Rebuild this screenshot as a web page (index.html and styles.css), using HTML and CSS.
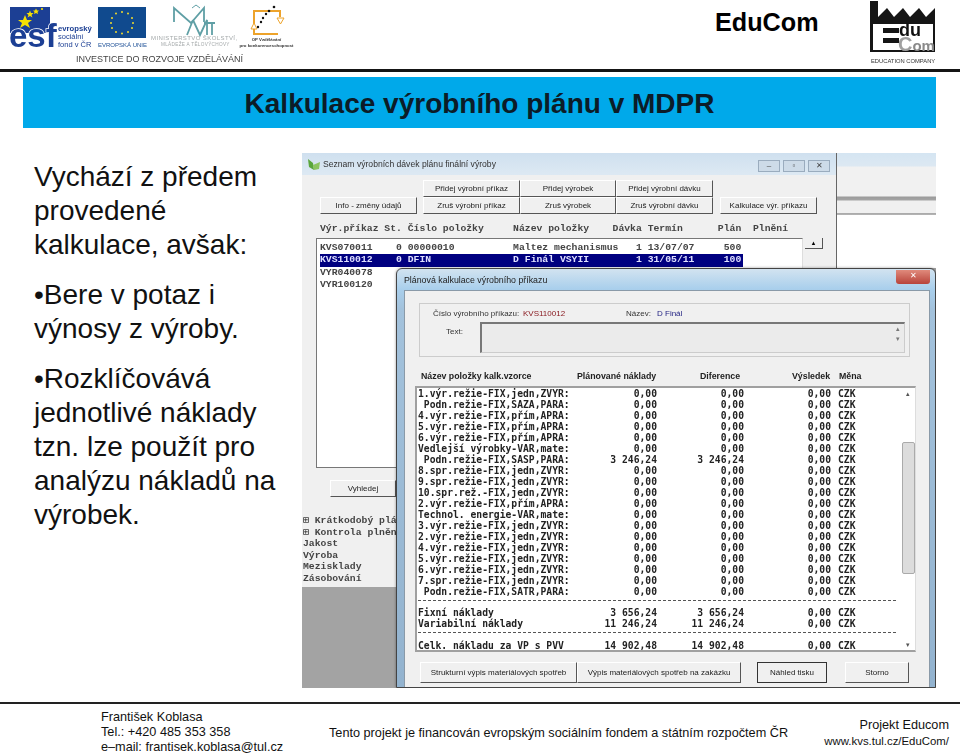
FILE: index.html
```html
<!DOCTYPE html>
<html lang="cs">
<head>
<meta charset="utf-8">
<title>Kalkulace výrobního plánu v MDPR</title>
<link rel="stylesheet" href="styles.css">
</head>
<body>
<div class="slide">
  <header class="top">
    <svg class="logos" width="300" height="68" viewBox="0 0 300 68">
      <rect x="10" y="7" width="40" height="26" fill="#1c3f94"/>
      <polygon points="25,15 27,20 32,20 28,23 30,28 25,25 20,28 22,23 18,20 23,20" fill="#f5e000"/>
      <polygon points="30,10.500 31,13 33.500,13 31.500,15 32.500,17.500 30,16 27.500,17.500 28.500,15 26.500,13 29,13" fill="#f5e000"/>
      <polygon points="36,8.500 37,10.500 39,10.500 37.500,12 38,14 36,13 34,14 34.500,12 33,10.500 35,10.500" fill="#f5e000"/>
      <circle cx="42" cy="9" r="1.100" fill="#f5e000"/>
      <text x="9" y="47" class="esf">esf</text>
      <text x="58" y="31" class="esf-a">evropský</text>
      <text x="58" y="39" class="esf-b">sociální</text>
      <text x="58" y="47" class="esf-b">fond v ČR</text>
      <rect x="98" y="7" width="48" height="31" fill="#104a8e"/>
      <g fill="#f2dc2b"><circle cx="122" cy="12" r="1"/><circle cx="128" cy="13.500" r="1"/><circle cx="132" cy="18" r="1"/><circle cx="133" cy="23" r="1"/><circle cx="132" cy="28" r="1"/><circle cx="128" cy="32" r="1"/><circle cx="122" cy="33.500" r="1"/><circle cx="116" cy="32" r="1"/><circle cx="112" cy="28" r="1"/><circle cx="111" cy="23" r="1"/><circle cx="112" cy="18" r="1"/><circle cx="116" cy="13.500" r="1"/></g>
      <text x="98" y="47" class="eu">EVROPSKÁ UNIE</text>
      <g fill="none" stroke="#5f9fa5" stroke-width="1.800"><path d="M174 22 L174 8 L191 23 L204 8 L204 22"/><path d="M187 35 L193 20 M193 20 L200 35 L207 20 L207 35 M204 23 L215 23 M212 23 L212 35"/><path d="M192 8 L196 5 L200 8" stroke-width="1"/></g>
      <text x="151" y="40" class="ms">MINISTERSTVO ŠKOLSTVÍ,</text>
      <text x="161" y="46" class="ms2">MLÁDEŽE A TĚLOVÝCHOVY</text>
      <g fill="none" stroke="#eda32b" stroke-width="2"><path d="M254 24 L254 11 L280 11 L280 17"/><path d="M254 29 L254 34 L278 34"/></g>
      <polygon points="277,18 284,18 280.500,24" fill="#fff" stroke="#eda32b"/>
      <polygon points="251,29 257,29 254,23" fill="#fff" stroke="#eda32b"/>
      <g fill="#111"><circle cx="274" cy="7" r="1.300"/><circle cx="269" cy="11" r="1.300"/><circle cx="266" cy="14" r="1.200"/><circle cx="263" cy="18" r="1.200"/><circle cx="261" cy="22" r="1.200"/><circle cx="258" cy="27" r="1.200"/></g>
      <text x="266.500" y="41" class="op" text-anchor="middle">OP Vzdělávání</text>
      <text x="266.500" y="47" class="op" text-anchor="middle">pro konkurenceschopnost</text>
      <text x="76" y="62" class="inv">INVESTICE DO ROZVOJE VZDĚLÁVÁNÍ</text>
    </svg>
    <div class="brand">EduCom</div>
    <svg class="edu" width="68" height="66" viewBox="0 0 68 66">
      <path d="M1 1 H9 V17 L18 8 L25 17 L34 8 L41 17 L50 8 L57 17 L66 8 V52 H1 Z" fill="#151515"/>
      <rect x="4" y="24" width="60" height="26" fill="#fff"/>
      <rect x="14" y="28" width="16" height="5" fill="#151515"/>
      <rect x="14" y="38" width="16" height="5" fill="#151515"/>
      <text x="30" y="36" class="edu-du">du</text>
      <text x="29" y="50.500" class="edu-com">C<tspan class="edu-om">om</tspan></text>
      <text x="2" y="63" class="edu-sub">EDUCATION COMPANY</text>
    </svg>
  </header>
  <h1 class="title">Kalkulace výrobního plánu v MDPR</h1>
  <main class="body">
    <section class="copy">
      <p>Vychází z předem provedené kalkulace, avšak:</p>
      <p>•Bere v potaz i výnosy z výroby.</p>
      <p>•Rozklíčovává jednotlivé náklady tzn. lze použít pro analýzu nákladů na výrobek.</p>
    </section>
    <figure class="shot">
      <div class="win-back-strip"></div>
      <div class="win-main">
        <div class="win-title">
          <svg width="14" height="14" viewBox="0 0 14 14"><path d="M1 2 L6 6 L7 13 L2 10 Z" fill="#5aa63c"/><path d="M6 8 L13 5 L12 12 L7 13 Z" fill="#8cc461"/></svg>
          <span>Seznam výrobních dávek plánu finální výroby</span>
          <div class="caps"><i>–</i><i>▫</i><i>✕</i></div>
        </div>
        <div class="toolbar">
          <button class="b b-info">Info - změny údajů</button>
          <div class="b-grid">
            <button class="b">Přidej výrobní příkaz</button><button class="b">Přidej výrobek</button><button class="b">Přidej výrobní dávku</button>
            <button class="b">Zruš výrobní příkaz</button><button class="b">Zruš výrobek</button><button class="b">Zruš výrobní dávku</button>
          </div>
          <button class="b b-kalk">Kalkulace výr. příkazu</button>
        </div>
        <pre class="list-head">Výr.příkaz St. Číslo položky     Název položky    Dávka Termín      Plán  Plnění</pre>
        <div class="list-row">
          <pre class="list">KVS070011    0 00000010          Maltez mechanismus   1 13/07/07     500
<span class="sel">KVS110012    0 DFIN              D Finál VSYII        1 31/05/11     100</span>
VYR040078
VYR100120</pre>
          <div class="scroll-up">▲</div>
        </div>
        <button class="b b-find">Vyhledej</button>
        <pre class="tree">⊞ Krátkodobý plán
⊞ Kontrola plnění
Jakost
Výroba
Mezisklady
Zásobování</pre>
      </div>
      <div class="win-dlg">
        <div class="dlg-title"><span>Plánová kalkulace výrobního příkazu</span><i class="close">✕</i></div>
        <div class="dlg-body">
          <div class="fields">
            <div class="f-row">
              <span class="f-l1">Číslo výrobního příkazu:</span><span class="red">KVS110012</span>
              <span class="f-l2">Název:</span><span class="navy">D Finál</span>
            </div>
            <div class="f-row2"><span class="f-l3">Text:</span><div class="memo"><b>▴</b><b>▾</b></div></div>
          </div>
          <div class="calc-head">
            <span>Název položky kalk.vzorce</span><span>Plánované náklady</span><span>Diference</span><span>Výsledek</span><span>Měna</span>
          </div>
          <div class="calc">
            <div class="rows">
              <div class="r"><span>1.výr.režie-FIX,jedn,ZVYR:</span><span>0,00</span><span>0,00</span><span>0,00</span><span>CZK</span></div>
              <div class="r"><span> Podn.režie-FIX,SAZA,PARA:</span><span>0,00</span><span>0,00</span><span>0,00</span><span>CZK</span></div>
              <div class="r"><span>4.výr.režie-FIX,přím,APRA:</span><span>0,00</span><span>0,00</span><span>0,00</span><span>CZK</span></div>
              <div class="r"><span>5.výr.režie-FIX,přím,APRA:</span><span>0,00</span><span>0,00</span><span>0,00</span><span>CZK</span></div>
              <div class="r"><span>6.výr.režie-FIX,přím,APRA:</span><span>0,00</span><span>0,00</span><span>0,00</span><span>CZK</span></div>
              <div class="r"><span>Vedlejší výrobky-VAR,mate:</span><span>0,00</span><span>0,00</span><span>0,00</span><span>CZK</span></div>
              <div class="r"><span> Podn.režie-FIX,SASP,PARA:</span><span>3 246,24</span><span>3 246,24</span><span>0,00</span><span>CZK</span></div>
              <div class="r"><span>8.spr.režie-FIX,jedn,ZVYR:</span><span>0,00</span><span>0,00</span><span>0,00</span><span>CZK</span></div>
              <div class="r"><span>9.spr.režie-FIX,jedn,ZVYR:</span><span>0,00</span><span>0,00</span><span>0,00</span><span>CZK</span></div>
              <div class="r"><span>10.spr.rež.-FIX,jedn,ZVYR:</span><span>0,00</span><span>0,00</span><span>0,00</span><span>CZK</span></div>
              <div class="r"><span>2.výr.režie-FIX,přím,APRA:</span><span>0,00</span><span>0,00</span><span>0,00</span><span>CZK</span></div>
              <div class="r"><span>Technol. energie-VAR,mate:</span><span>0,00</span><span>0,00</span><span>0,00</span><span>CZK</span></div>
              <div class="r"><span>3.výr.režie-FIX,jedn,ZVYR:</span><span>0,00</span><span>0,00</span><span>0,00</span><span>CZK</span></div>
              <div class="r"><span>2.výr.režie-FIX,jedn,ZVYR:</span><span>0,00</span><span>0,00</span><span>0,00</span><span>CZK</span></div>
              <div class="r"><span>4.výr.režie-FIX,jedn,ZVYR:</span><span>0,00</span><span>0,00</span><span>0,00</span><span>CZK</span></div>
              <div class="r"><span>5.výr.režie-FIX,jedn,ZVYR:</span><span>0,00</span><span>0,00</span><span>0,00</span><span>CZK</span></div>
              <div class="r"><span>6.výr.režie-FIX,jedn,ZVYR:</span><span>0,00</span><span>0,00</span><span>0,00</span><span>CZK</span></div>
              <div class="r"><span>7.spr.režie-FIX,jedn,ZVYR:</span><span>0,00</span><span>0,00</span><span>0,00</span><span>CZK</span></div>
              <div class="r"><span> Podn.režie-FIX,SATR,PARA:</span><span>0,00</span><span>0,00</span><span>0,00</span><span>CZK</span></div>
              <div class="dash"></div>
              <div class="r"><span>Fixní náklady</span><span>3 656,24</span><span>3 656,24</span><span>0,00</span><span>CZK</span></div>
              <div class="r"><span>Variabilní náklady</span><span>11 246,24</span><span>11 246,24</span><span>0,00</span><span>CZK</span></div>
              <div class="dash"></div>
              <div class="r"><span>Celk. nákladu za VP s PVV</span><span>14 902,48</span><span>14 902,48</span><span>0,00</span><span>CZK</span></div>
            </div>
            <div class="vscroll"><b>▴</b><div class="thumb"></div><b>▾</b></div>
          </div>
          <div class="dlg-btns">
            <button class="b b-s1">Strukturní výpis materiálových spotřeb</button><button class="b b-s2">Výpis materiálových spotřeb na zakázku</button>
            <button class="b b-s3">Náhled tisku</button>
            <button class="b b-s4">Storno</button>
          </div>
        </div>
      </div>
    </figure>
  </main>
  <footer class="foot">
    <div class="f-left">František Koblasa<br>Tel.: +420 485 353 358<br>e–mail: frantisek.koblasa@tul.cz</div>
    <div class="f-mid">Tento projekt je financován evropským sociálním fondem a státním rozpočtem ČR</div>
    <div class="f-right">Projekt Educom<br><span>www.kvs.tul.cz/EduCom/</span></div>
  </footer>
</div>
</body>
</html>
```
FILE: styles.css
```css
html, body { margin: 0; padding: 0; background: #fff; }
.slide { width: 960px; height: 755px; overflow: hidden; font-family: "Liberation Sans", Arial, sans-serif; color: #000; display: flex; flex-direction: column; }

.top { flex: none; height: 69px; border-bottom: 3px solid #151515; display: flex; align-items: flex-start; }
.logos { display: block; flex: none; filter: blur(.4px); }
.brand { margin-left: 415px; margin-top: 4px; width: 154px; font-size: 25.200px; font-weight: 700; line-height: 36px; }
.edu { display: block; flex: none; filter: blur(.3px); }
.esf { font: 700 33px "Liberation Sans", sans-serif; fill: #1c3f94; stroke: #fff; stroke-width: 1.500px; paint-order: stroke; }
.esf-a { font: 700 7.700px "Liberation Sans", sans-serif; fill: #1c3f94; }
.esf-b { font: 7.500px "Liberation Sans", sans-serif; fill: #1c3f94; }
.eu { font: 6px "Liberation Sans", sans-serif; fill: #1c4f96; }
.ms { font: 6px "Liberation Sans", sans-serif; fill: #a4a9aa; letter-spacing: .4px; }
.ms2 { font: 4.700px "Liberation Sans", sans-serif; fill: #a4a9aa; letter-spacing: .3px; }
.op { font: 700 4.300px "Liberation Sans", sans-serif; fill: #333; }
.inv { font: 9px "Liberation Sans", sans-serif; fill: #444; }
.edu-du { font: 700 18px "Liberation Sans", sans-serif; fill: #111; }
.edu-com { font: 700 20px "Liberation Sans", sans-serif; fill: #a0a0a0; }
.edu-om { font-size: 15px; fill: #8a8a8a; }
.edu-sub { font: 5.800px "Liberation Sans", sans-serif; fill: #333; }

.title { flex: none; margin: 5px 24px 0 23px; height: 51px; background: #00a9ea; font-size: 28px; font-weight: 700; line-height: 54px; text-align: center; color: #0c1c28; }

.body { flex: none; display: flex; margin-top: 25px; height: 535px; }
.copy { flex: none; width: 250px; margin: 0 18px 0 34px; font-size: 28px; line-height: 34px; padding-top: 7px; box-sizing: border-box; color: #111; }
.copy p { margin: 0 0 16px; }
.shot { position: relative; flex: none; width: 634px; height: 535px; margin: 0; background: #a3a3a3; overflow: hidden; font-family: "Liberation Sans", sans-serif; filter: blur(.35px); }
.win-back-strip { position: absolute; left: 534px; top: 0; right: 0; height: 115px; background: linear-gradient(#d5e5f2 0, #dce8f2 13px, #f1f1f1 14px, #f1f1f1 43px, #9b9b9b 44px, #a5a5a5 47px, #f0f0f0 48px, #f0f0f0 60px, #666 61px, #fff 62px); }

.win-main { position: absolute; left: 0; top: 0; width: 535px; height: 434px; box-sizing: border-box; background: #f0f0f0; border-right: 1px solid #666; display: flex; flex-direction: column; }
.win-title { height: 22px; flex: none; background: linear-gradient(#cfe0ef, #dde9f3); display: flex; align-items: center; padding-left: 5px; font-size: 8.600px; color: #333; position: relative; gap: 2px; }
.caps { position: absolute; right: 6px; top: 7px; display: flex; gap: 3px; }
.caps i { width: 22px; height: 12px; background: #cddbe8; border: 1px solid #9aacbe; box-sizing: border-box; font: normal 8px/10px "Liberation Sans", sans-serif; text-align: center; color: #444; }
.toolbar { display: flex; align-items: flex-end; height: 39px; flex: none; padding-left: 18px; }
.b { font: 8px "Liberation Sans", sans-serif; color: #222; background: #f0f0f0; border: 1px solid #fff; border-right-color: #555; border-bottom-color: #555; padding: 0; box-sizing: border-box; white-space: nowrap; }
.b-info { width: 97px; height: 17px; margin-right: 6px; }
.b-grid { display: grid; grid-template-columns: 97px 96px 97px; grid-auto-rows: 17px; }
.b-kalk { width: 97px; height: 17px; margin-left: 7px; }
.list-head { margin: 9px 0 0 18px; flex: none; font: 700 9.760px/12px "Liberation Mono", monospace; color: #444; }
.list-row { display: flex; margin: 3px 0 0 14px; height: 230px; flex: none; }
.list { margin: 0; width: 487px; box-sizing: border-box; background: #fff; border: 1px solid #777; border-right-color: #ddd; padding: 3px 0 0 3px; font: 700 9.760px/12.300px "Liberation Mono", monospace; color: #444; }
.sel { background: #000080; color: #dfe0ff; display: inline-block; width: 423px; }
.scroll-up { margin-left: 2px; width: 17px; height: 10px; font-size: 6px; line-height: 10px; text-align: center; border-bottom: 1px solid #555; border-right: 1px solid #555; }
.b-find { width: 66px; height: 17px; flex: none; margin: 12px 0 0 28px; }
.tree { margin: 18px 0 0 1px; font: 700 9.760px/11.600px "Liberation Mono", monospace; color: #444; }

.win-dlg { position: absolute; left: 94px; top: 115px; width: 540px; height: 420px; box-sizing: border-box; border: 1px solid #444; border-radius: 6px 6px 0 0; background: linear-gradient(#d2e3f0, #a9cfec 20px, #a3c2dc 40px, #93b3cf); padding: 0 5px 0 7px; display: flex; flex-direction: column; box-shadow: 0 0 3px rgba(0,0,0,.4); }
.dlg-title { height: 21px; flex: none; display: flex; align-items: center; justify-content: space-between; font-size: 8.800px; color: #222; }
.close { font: normal 8px/12px "Liberation Sans", sans-serif; color: #fff; width: 34px; height: 14px; text-align: center; background: linear-gradient(#e08a7c, #b8433a); border-radius: 0 0 3px 3px; margin-top: -6px; }
.dlg-body { flex: 1; background: #f0f0f0; border: 1px solid #8a9aa8; border-bottom: 0; padding: 12px 0 0 14px; display: flex; flex-direction: column; min-height: 0; }
.fields { height: 54px; width: 491px; flex: none; border: 1px solid #ccc; box-sizing: border-box; padding: 2px 0 0 13px; font-size: 8px; color: #333; }
.f-row { display: flex; height: 14px; align-items: center; white-space: nowrap; }
.f-l1 { width: 90px; }
.red { width: 103px; color: #8a1c22; }
.f-l2 { width: 31px; }
.navy { color: #1e1e80; }
.f-row2 { display: flex; margin-top: 2px; }
.f-l3 { width: 47px; padding: 5px 0 0 13px; box-sizing: border-box; }
.memo { width: 425px; height: 31px; box-sizing: border-box; background: #ebebeb; border: 1px solid #ccc; border-top: 2px solid #777; border-left: 2px solid #777; display: flex; flex-direction: column; align-items: flex-end; padding-right: 4px; }
.memo b { font: 7px/10px "Liberation Sans", sans-serif; color: #777; }
.calc-head { flex: none; display: grid; grid-template-columns: 156px 123px 92px 47px 30px; margin: 13px 0 0 2px; font-size: 8.800px; font-weight: 700; height: 13px; line-height: 13px; color: #222; white-space: nowrap; }
.calc { flex: none; display: flex; width: 501px; height: 266px; margin: 3px 0 0 -4px; background: #fff; border: 2px solid #a0a0a0; border-right: 1px solid #ddd; box-sizing: border-box; overflow: hidden; }
.rows { flex: none; width: 484px; padding: 0 0 0 1px; box-sizing: border-box; }
.r { display: grid; grid-template-columns: 152px 87px 87px 87px 30px; height: 11px; font: 700 9.700px/11px "DejaVu Sans Mono", monospace; color: #222; white-space: pre; }
.r span:nth-child(2), .r span:nth-child(3), .r span:nth-child(4) { text-align: right; }
.r span:nth-child(5) { padding-left: 7px; }
.dash { height: 6px; margin: 3px 0 1px; width: 478px; border-top: 1px dashed #555; box-sizing: border-box; }
.dash:nth-last-child(2) { margin: 3px 0 2px; }
.vscroll { flex: 1; display: flex; flex-direction: column; align-items: center; padding-top: 1px; }
.vscroll b { font: 7px/10px "Liberation Sans", sans-serif; color: #555; }
.thumb { width: 11px; height: 130px; margin-top: 43px; background: #dcdcdc; border: 1px solid #aaa; border-radius: 2px; }
.vscroll b:last-child { margin-top: auto; }
.dlg-btns { flex: none; display: flex; margin: 10px 0 0 1px; align-items: center; }
.b-s1 { width: 157px; height: 21px; }
.b-s2 { width: 164px; height: 21px; }
.b-s3 { width: 70px; height: 21px; margin-left: 16px; border: 1px solid #333; }
.b-s4 { width: 64px; height: 21px; margin-left: 18px; }

.foot { margin-top: 14px; border-top: 2px solid #222; flex: 1; font-size: 12.700px; display: flex; color: #111; }
.f-left { width: 329px; box-sizing: border-box; padding: 6px 0 0 101px; line-height: 15.200px; white-space: nowrap; }
.f-mid { padding-top: 21px; line-height: 16px; white-space: nowrap; }
.f-right { margin-left: auto; padding: 14px 11px 0 0; line-height: 15.500px; text-align: right; white-space: nowrap; }
.f-right span { font-size: 11.400px; }
```
